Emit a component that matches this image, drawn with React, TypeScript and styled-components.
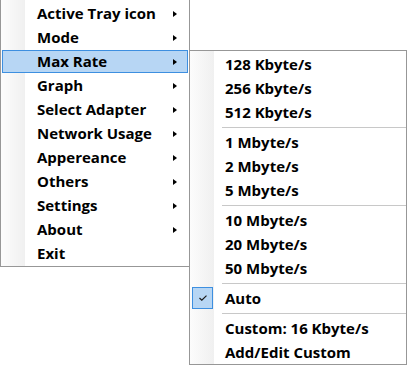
import React from 'react';
import styled, {createGlobalStyle} from 'styled-components';

interface IMenuItem {
    label: string;
    sub?: boolean;
    active?: boolean;
}

interface IRateItem {
    label?: string;
    separator?: boolean;
    checked?: boolean;
}

const mainItems: IMenuItem[] = [
    {label: 'Active Tray icon', sub: true},
    {label: 'Mode', sub: true},
    {label: 'Max Rate', sub: true, active: true},
    {label: 'Graph', sub: true},
    {label: 'Select Adapter', sub: true},
    {label: 'Network Usage', sub: true},
    {label: 'Appereance', sub: true},
    {label: 'Others', sub: true},
    {label: 'Settings', sub: true},
    {label: 'About', sub: true},
    {label: 'Exit'},
];

const rateItems: IRateItem[] = [
    {label: '128 Kbyte/s'},
    {label: '256 Kbyte/s'},
    {label: '512 Kbyte/s'},
    {separator: true},
    {label: '1 Mbyte/s'},
    {label: '2 Mbyte/s'},
    {label: '5 Mbyte/s'},
    {separator: true},
    {label: '10 Mbyte/s'},
    {label: '20 Mbyte/s'},
    {label: '50 Mbyte/s'},
    {separator: true},
    {label: 'Auto', checked: true},
    {separator: true},
    {label: 'Custom: 16 Kbyte/s'},
    {label: 'Add/Edit Custom'},
];

const GlobalStyle = createGlobalStyle`
  html, body {
    margin: 0;
    padding: 0;
    background: #ffffff;
  }

  body {
    font-family: "Open Sans", "Noto Sans", sans-serif;
  }
`;

const App = () => {
    return (
        <Page>
            <GlobalStyle/>
            <MainMenu>
                {mainItems.map(item => (
                    <Row key={item.label}>
                        <Highlight $active={!!item.active}>
                            <Label>{item.label}</Label>
                            {item.sub && <Arrow/>}
                        </Highlight>
                    </Row>
                ))}
            </MainMenu>
            <SubMenu>
                {rateItems.map((item, i) => item.separator ? (
                    <Separator key={'sep' + i}/>
                ) : (
                    <Row key={item.label}>
                        {item.checked && (
                            <CheckBox>
                                <svg width="8" height="6" viewBox="0 0 8 6">
                                    <path d="M0.5 3 L2.8 5.2 L7.5 0.6" fill="none" stroke="#1a1a1a" strokeWidth="1.2"/>
                                </svg>
                            </CheckBox>
                        )}
                        <Label>{item.label}</Label>
                    </Row>
                ))}
            </SubMenu>
        </Page>
    );
};

const Page = styled.div`
  display: flex;
  align-items: flex-start;
  width: 407px;
  height: 366px;
  overflow: hidden;
`;

const MenuBase = styled.div`
  position: relative;
  display: flex;
  flex-direction: column;
  background: linear-gradient(to right, #fcfcfc 0, #f0f0f0 24px, #ffffff 24px);
  border: 1px solid #979797;
  box-sizing: border-box;
`;

const MainMenu = styled(MenuBase)`
  width: 190px;
  border-top: none;
  padding-top: 2px;
`;

const SubMenu = styled(MenuBase)`
  width: 218px;
  margin-left: -1px;
  margin-top: 50px;
  padding-top: 1px;
`;

const Row = styled.div`
  position: relative;
  display: flex;
  align-items: center;
  height: 24px;
  padding-left: 35px;
`;

const Highlight = styled.div<{ $active: boolean }>`
  position: absolute;
  inset: 0 1px 1px 1px;
  display: flex;
  align-items: center;
  padding-left: 34px;
  background: ${p => p.$active ? '#b7d6f4' : 'transparent'};
  border: 1px solid ${p => p.$active ? '#3d8fe0' : 'transparent'};
`;

const Label = styled.span`
  font-size: 15px;
  font-weight: 700;
  color: #000000;
  white-space: nowrap;
  line-height: 1;
`;

const Arrow = styled.span`
  position: absolute;
  right: 10px;
  top: 8px;
  width: 0;
  height: 0;
  border-top: 3.5px solid transparent;
  border-bottom: 3.5px solid transparent;
  border-left: 4px solid #000000;
`;

const Separator = styled.div`
  height: 6px;
  display: flex;
  align-items: center;
  padding-left: 32px;

  &::after {
    content: '';
    flex: 1;
    height: 1px;
    background: #c8c8c8;
  }
`;

const CheckBox = styled.span`
  position: absolute;
  left: 2px;
  top: 1px;
  width: 19px;
  height: 20px;
  display: flex;
  align-items: center;
  justify-content: center;
  background: #b7d6f4;
  border: 1px solid #3d8fe0;
`;

export default App;
